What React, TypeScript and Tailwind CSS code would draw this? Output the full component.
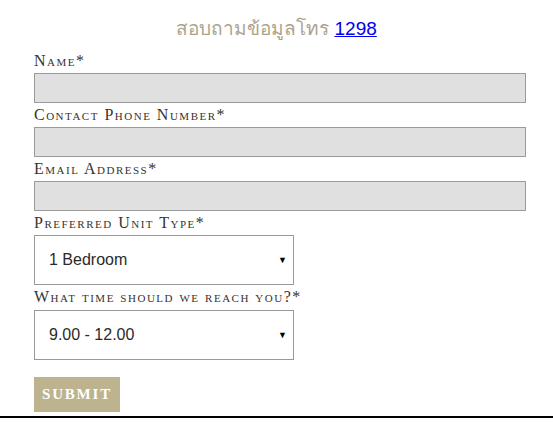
import React, { useState } from 'react';

const labelCls =
  "block h-6 pt-[3px] text-[16px] leading-[18px] text-[#38332e] [font-variant:small-caps] tracking-[1.5px] font-['Liberation_Serif',serif]";

const inputCls =
  "block w-full h-[30px] bg-[#e0e0e0] border border-[#9a9a9a] outline-none px-2 text-[14px]";

function Field({ label, type = 'text' }: { label: string; type?: string }) {
  return (
    <div>
      <label className={labelCls}>{label}*</label>
      <input type={type} className={inputCls} />
    </div>
  );
}

function SelectField({
  label,
  options,
  gap,
}: {
  label: string;
  options: string[];
  gap: string;
}) {
  const [value, setValue] = useState(options[0]);
  return (
    <div>
      <label className={`${labelCls} ${gap}`}>{label}*</label>
      <div className="relative w-[260px]">
        <select
          value={value}
          onChange={(e) => setValue(e.target.value)}
          className="block w-full h-[50px] appearance-none bg-white border border-[#9a9a9a] pl-[14px] pr-8 text-[16px] text-[#2a2a2a] outline-none font-['Liberation_Sans',Arial,sans-serif]"
        >
          {options.map((o) => (
            <option key={o}>{o}</option>
          ))}
        </select>
        <span className="pointer-events-none absolute right-[7px] top-1/2 -translate-y-1/2 text-[9px] text-black">
          ▼
        </span>
      </div>
    </div>
  );
}

export default function App() {
  return (
    <div className="w-[553px] h-[433px] bg-white">
      <h2 className="h-[49px] pt-[15px] text-center text-[19px] leading-[28px] text-[#aca38b] font-['Liberation_Sans','Noto_Sans',sans-serif]">
        สอบถามข้อมูลโทร{' '}
        <a href="#" className="text-[#0000ee] underline">
          1298
        </a>
      </h2>

      <form className="pl-[34px] pr-[27px]" onSubmit={(e) => e.preventDefault()}>
        <Field label="Name" />
        <Field label="Contact Phone Number" type="tel" />
        <Field label="Email Address" type="email" />
        <SelectField
          label="Preferred Unit Type"
          gap=""
          options={['1 Bedroom', '2 Bedroom', '3 Bedroom']}
        />
        <SelectField
          label="What time should we reach you?"
          gap="h-[25px]"
          options={['9.00 - 12.00', '12.00 - 15.00', '15.00 - 18.00']}
        />
        <button
          type="submit"
          className="mt-[17px] block w-[86px] h-[35px] bg-[#bdb38e] text-white text-[15px] tracking-[1.8px] font-semibold font-['Liberation_Serif',serif]"
        >
          SUBMIT
        </button>
      </form>

      <div className="mt-[4px] h-[2px] bg-black" />
    </div>
  );
}
